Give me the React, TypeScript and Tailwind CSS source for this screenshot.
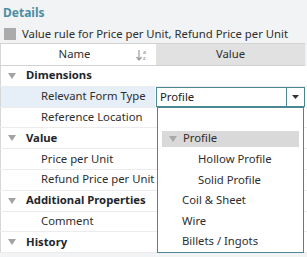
import { ReactNode } from "react";

type Row = {
  label: string;
  group?: boolean;
  selected?: boolean;
};

const ROWS: Row[] = [
  { label: "Dimensions", group: true },
  { label: "Relevant Form Type", selected: true },
  { label: "Reference Location" },
  { label: "Value", group: true },
  { label: "Price per Unit" },
  { label: "Refund Price per Unit" },
  { label: "Additional Properties", group: true },
  { label: "Comment" },
  { label: "History", group: true },
];

const OPTIONS = [
  { label: "", indent: 0 },
  { label: "Profile", indent: 0, group: true, active: true },
  { label: "Hollow Profile", indent: 1 },
  { label: "Solid Profile", indent: 1 },
  { label: "Coil & Sheet", indent: 0 },
  { label: "Wire", indent: 0 },
  { label: "Billets / Ingots", indent: 0 },
];

function Caret({ className }: { className: string }) {
  return (
    <svg width="8" height="6" viewBox="0 0 8 6" className={className}>
      <path d="M0 0 L8 0 L4 6 Z" fill="currentColor" />
    </svg>
  );
}

// sort a→z glyph in the Name header
function SortIcon() {
  return (
    <span className="flex items-center gap-[1px] text-[#9b9b9b]">
      <svg width="6" height="11" viewBox="0 0 6 11">
        <path d="M3 0 V9.5 M0.5 7 L3 10 L5.5 7" stroke="currentColor" strokeWidth="1.2" fill="none" />
      </svg>
      <span className="flex flex-col text-[5px] leading-[6px] font-semibold">
        <span>a</span>
        <span>z</span>
      </span>
    </span>
  );
}

function Cell({ children, className }: { children: ReactNode; className?: string }) {
  return <div className={`flex items-center ${className ?? ""}`}>{children}</div>;
}

export default function App() {
  return (
    <div
      className="relative w-[307px] h-[257px] overflow-hidden whitespace-nowrap bg-[#f1f3f4] text-[11.3px] text-[#2e2e2e]"
      style={{ fontFamily: '"Noto Sans", "Open Sans", sans-serif' }}
    >
      {/* Title */}
      <div className="h-[24px] pl-[3px] pt-[5px] text-[12px] font-bold leading-[16px] text-[#4b8ea3]">
        Details
      </div>

      {/* Selection summary */}
      <div className="flex h-[19px] items-center gap-[6px] pl-[4px]">
        <span className="h-[12px] w-[12px] bg-[#ababab]" />
        <span className="leading-[14px]">Value rule for Price per Unit, Refund Price per Unit</span>
      </div>

      {/* Grid header */}
      <div className="w-[305px] border-l border-[#d6d6d6]">
        <div className="flex h-[23px] border-t border-b border-[#d2d2d2]">
          <Cell className="relative w-[155px] justify-center bg-white">
            <span className="pr-[8px]">Name</span>
            <span className="absolute right-[10px] top-[5px]">
              <SortIcon />
            </span>
          </Cell>
          <Cell className="flex-1 justify-center bg-[#e1e1e1]">Value</Cell>
        </div>
      </div>

      {/* Grid rows */}
      <div className="bg-white">
        {ROWS.map((row) => (
          <div key={row.label} className="flex h-[20.8px] border-b border-[#ececec]">
            <Cell
              className={`w-[155px] border-l border-[#d6d6d6] ${row.selected ? "bg-[#e6eef7]" : ""}`}
            >
              {row.group ? (
                <>
                  <Caret className="ml-[7px] mr-[10px] text-[#a3a3a3]" />
                  <span className="font-bold text-[#22262b]">{row.label}</span>
                </>
              ) : (
                <span className="pl-[40px]">{row.label}</span>
              )}
            </Cell>
            <div className="flex-1">
              {row.selected && (
                <div className="ml-[1px] mr-[2px] flex h-[20px] border border-[#4b8791] bg-white">
                  <span className="flex-1 pl-[3px] leading-[18px] text-[#222]">Profile</span>
                  <span className="flex w-[18px] items-center justify-center border-l border-[#4b8791]">
                    <svg width="7" height="4" viewBox="0 0 7 4">
                      <path d="M0 0 L7 0 L3.5 4 Z" fill="#333" />
                    </svg>
                  </span>
                </div>
              )}
            </div>
          </div>
        ))}
      </div>

      {/* Dropdown list */}
      <div className="absolute left-[157px] top-[107px] w-[147px] border border-[#4b8791] bg-white px-[4px] py-0">
        {OPTIONS.map((opt, i) => (
          <div key={i} className="flex h-[20.6px] items-center py-[2px]">
            <div
              className={`flex h-full w-full items-center ${opt.active ? "bg-[#d9d9d9]" : ""} ${
                opt.indent ? "pl-[36px]" : "pl-[20px]"
              }`}
            >
              {opt.group && <Caret className="-ml-[13px] mr-[6px] text-[#a9a9a9]" />}
              <span>{opt.label}</span>
            </div>
          </div>
        ))}
      </div>
    </div>
  );
}
